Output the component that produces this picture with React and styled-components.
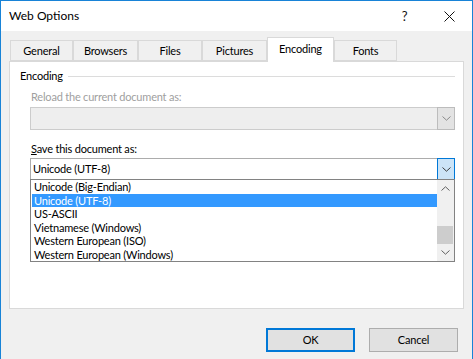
import React from 'react';
import styled, { createGlobalStyle } from 'styled-components';

const GlobalStyle = createGlobalStyle`
  html, body {
    margin: 0;
    padding: 0;
    background: #ffffff;
  }
  body {
    font-family: Lato, "Liberation Sans", sans-serif;
    font-size: 11px;
    letter-spacing: -0.2px;
    color: #000;
  }
  * { box-sizing: border-box; }
`;

const Window = styled.div`
  width: 473px;
  height: 359px;
  border: 1px solid #1883d7;
  border-bottom: none;
  background: #f0f0f0;
  display: flex;
  flex-direction: column;
  overflow: hidden;
`;

const TitleBar = styled.div`
  height: 30px;
  background: #ffffff;
  display: flex;
  align-items: center;
  padding-left: 8px;
`;

const TitleText = styled.div`
  flex: 1;
  font-size: 12px;
  letter-spacing: 0;
  line-height: 16px;
`;

const CaptionButton = styled.div`
  width: 45px;
  height: 30px;
  display: flex;
  align-items: center;
  justify-content: center;
  font-size: 13px;
  color: #111;
`;

const Body = styled.div`
  flex: 1;
  padding: 7px 8px 0 8px;
  display: flex;
  flex-direction: column;
`;

const TabStrip = styled.div`
  display: flex;
  align-items: flex-end;
  height: 23px;
  padding-left: 1px;
  position: relative;
  z-index: 1;
`;

const Tab = styled.div`
  width: ${p => p.w}px;
  height: ${p => (p.active ? 25 : 21)}px;
  margin-bottom: ${p => (p.active ? -1 : 0)}px;
  border: 1px solid #d9d9d9;
  border-bottom: ${p => (p.active ? 'none' : '1px solid #d9d9d9')};
  background: ${p => (p.active ? '#ffffff' : '#f0f0f0')};
  display: flex;
  align-items: center;
  justify-content: center;
  padding-bottom: ${p => (p.active ? 3 : 0)}px;
  line-height: 16px;
`;

const Panel = styled.div`
  height: 248px;
  background: #ffffff;
  border: 1px solid #d9d9d9;
  padding: 6px 8px 0 10px;
  display: flex;
  flex-direction: column;
`;

const GroupHeader = styled.div`
  display: flex;
  align-items: center;
  line-height: 16px;
`;

const GroupLine = styled.div`
  flex: 1;
  height: 1px;
  background: #dcdcdc;
  margin-left: 5px;
`;

const FieldLabel = styled.div`
  margin: ${p => p.top}px 0 0 11px;
  line-height: 16px;
  color: ${p => (p.disabled ? '#a0a0a0' : '#000')};
`;

const Underline = styled.span`
  text-decoration: underline;
`;

const ComboWrap = styled.div`
  position: relative;
  margin: ${p => p.top}px 0 0 10px;
`;

const Combo = styled.div`
  height: ${p => (p.disabled ? 23 : 22)}px;
  border: 1px solid ${p => (p.disabled ? '#cccccc' : '#acacac')};
  background: ${p => (p.disabled ? '#eeeeee' : '#ffffff')};
  display: flex;
  align-items: stretch;
`;

const ComboText = styled.div`
  flex: 1;
  padding-left: 2px;
  display: flex;
  align-items: center;
  line-height: 16px;
`;

const ComboButton = styled.div`
  width: 18px;
  margin: -1px -1px -1px 0;
  border: 1px solid ${p => (p.open ? '#0078d7' : '#bcbcbc')};
  background: ${p => (p.open ? '#cce4f7' : '#e3e3e3')};
  display: flex;
  align-items: center;
  justify-content: center;
  color: ${p => (p.open ? '#3c3c3c' : '#8a8a8a')};
`;

const DropList = styled.div`
  position: absolute;
  left: 0;
  right: 0;
  top: 21px;
  height: 83px;
  border: 1px solid #828282;
  background: #ffffff;
  display: flex;
  z-index: 5;
`;

const Items = styled.div`
  flex: 1;
  padding-left: 1px;
`;

const Item = styled.div`
  height: 13.5px;
  line-height: 13.5px;
  padding-left: 2px;
  white-space: nowrap;
  background: ${p => (p.selected ? '#3399ff' : 'transparent')};
  color: ${p => (p.selected ? '#ffffff' : '#000')};
`;

const ScrollBar = styled.div`
  width: 17px;
  background: #f0f0f0;
  display: flex;
  flex-direction: column;
  align-items: center;
  color: #606060;
`;

const ScrollArrow = styled.div`
  height: 17px;
  width: 100%;
  display: flex;
  align-items: center;
  justify-content: center;
`;

const ScrollTrack = styled.div`
  flex: 1;
  width: 100%;
  display: flex;
  flex-direction: column;
  justify-content: flex-end;
  padding: 0 1px 0 0;
`;

const Thumb = styled.div`
  height: 18px;
  background: #cdcdcd;
`;

const Footer = styled.div`
  display: flex;
  justify-content: flex-end;
  gap: 14px;
  padding: 19px 6px 0 0;
`;

const Button = styled.div`
  width: 89px;
  height: 24px;
  background: #e1e1e1;
  border: ${p => (p.primary ? '2px solid #0078d7' : '1px solid #adadad')};
  display: flex;
  align-items: center;
  justify-content: center;
  line-height: 16px;
`;

const Chevron = ({ up }) => (
  <svg width="9" height="5" viewBox="0 0 9 5">
    <polyline
      points={up ? '0.5,4.5 4.5,0.8 8.5,4.5' : '0.5,0.5 4.5,4.2 8.5,0.5'}
      fill="none"
      stroke="currentColor"
      strokeWidth="1"
    />
  </svg>
);

const tabs = [
  { label: 'General', w: 63 },
  { label: 'Browsers', w: 65 },
  { label: 'Files', w: 64 },
  { label: 'Pictures', w: 65 },
  { label: 'Encoding', w: 67, active: true },
  { label: 'Fonts', w: 63 },
];

const encodings = [
  'Unicode (Big-Endian)',
  'Unicode (UTF-8)',
  'US-ASCII',
  'Vietnamese (Windows)',
  'Western European (ISO)',
  'Western European (Windows)',
];

export default function App() {
  return (
    <>
      <GlobalStyle />
      <Window>
        <TitleBar>
          <TitleText>Web Options</TitleText>
          <CaptionButton>?</CaptionButton>
          <CaptionButton>
            <svg width="11" height="11" viewBox="0 0 11 11">
              <path d="M0.5 0.5 L10.5 10.5 M10.5 0.5 L0.5 10.5" stroke="#111" strokeWidth="1" />
            </svg>
          </CaptionButton>
        </TitleBar>
        <Body>
          <TabStrip>
            {tabs.map(t => (
              <Tab key={t.label} w={t.w} active={t.active}>
                {t.label}
              </Tab>
            ))}
          </TabStrip>
          <Panel>
            <GroupHeader>
              Encoding
              <GroupLine />
            </GroupHeader>
            <FieldLabel top={5} disabled>
              Reload the current document as:
            </FieldLabel>
            <ComboWrap top={2}>
              <Combo disabled>
                <ComboText />
                <ComboButton>
                  <Chevron />
                </ComboButton>
              </Combo>
            </ComboWrap>
            <FieldLabel top={11}>
              <Underline>S</Underline>ave this document as:
            </FieldLabel>
            <ComboWrap top={1}>
              <Combo>
                <ComboText>Unicode (UTF-8)</ComboText>
                <ComboButton open>
                  <Chevron />
                </ComboButton>
              </Combo>
              <DropList>
                <Items>
                  {encodings.map((e, i) => (
                    <Item key={e} selected={i === 1}>
                      {e}
                    </Item>
                  ))}
                </Items>
                <ScrollBar>
                  <ScrollArrow>
                    <Chevron up />
                  </ScrollArrow>
                  <ScrollTrack>
                    <Thumb />
                  </ScrollTrack>
                  <ScrollArrow>
                    <Chevron />
                  </ScrollArrow>
                </ScrollBar>
              </DropList>
            </ComboWrap>
          </Panel>
          <Footer>
            <Button primary>OK</Button>
            <Button>Cancel</Button>
          </Footer>
        </Body>
      </Window>
    </>
  );
}
